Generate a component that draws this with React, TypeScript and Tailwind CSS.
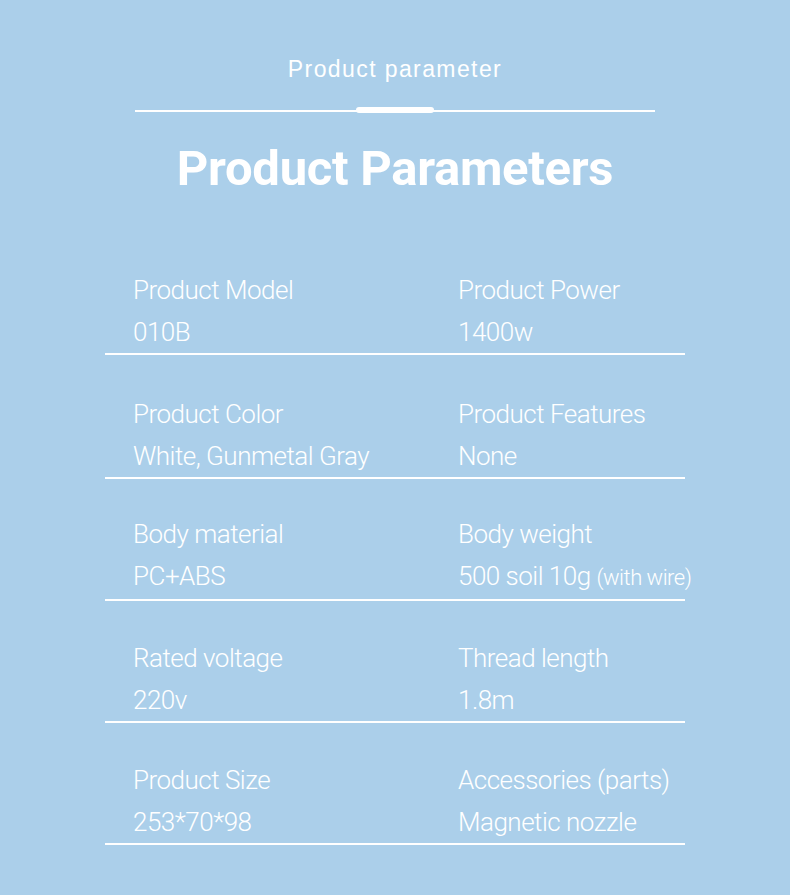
import React from "react";

const rows: { l: string; lv: React.ReactNode; r: string; rv: React.ReactNode; pt: string }[] = [
  { l: "Product Model", lv: "010B", r: "Product Power", rv: "1400w", pt: "pt-[0px]" },
  { l: "Product Color", lv: "White, Gunmetal Gray", r: "Product Features", rv: "None", pt: "pt-[38px]" },
  {
    l: "Body material",
    lv: "PC+ABS",
    r: "Body weight",
    rv: (
      <>
        500 soil 10g <span className="text-[22px]">(with wire)</span>
      </>
    ),
    pt: "pt-[34px]",
  },
  { l: "Rated voltage", lv: "220v", r: "Thread length", rv: "1.8m", pt: "pt-[36px]" },
  { l: "Product Size", lv: "253*70*98", r: "Accessories (parts)", rv: "Magnetic nozzle", pt: "pt-[36px]" },
];

export default function App() {
  return (
    <div className="w-[790px] h-[895px] bg-[#abcfea] flex flex-col items-center pt-[56px] overflow-hidden">
      <div
        className="text-white text-[23px] leading-[26px] tracking-[1.4px]"
        style={{ fontFamily: '"Liberation Sans", Arial, sans-serif' }}
      >
        Product parameter
      </div>
      <div className="relative mt-[28px] w-[520px] h-[2px] bg-white">
        <div className="absolute left-1/2 -translate-x-1/2 top-[-3px] w-[78px] h-[6px] rounded-[3px] bg-white" />
      </div>
      <h1
        className="mt-[27px] text-white font-bold text-[49px] leading-[60px] tracking-[-0.3px]"
        style={{ fontFamily: 'Roboto, "Noto Sans", sans-serif' }}
      >
        Product Parameters
      </h1>
      <div
        className="mt-[70px] w-[580px] flex flex-col text-white font-light text-[26px] leading-[42px] tracking-[-0.5px]"
        style={{ fontFamily: 'Roboto, "Noto Sans", sans-serif' }}
      >
        {rows.map((row, i) => (
          <div key={i} className={`${row.pt} border-b-2 border-white grid grid-cols-[353px_1fr] pl-[28px]`}>
            <div className="flex flex-col">
              <div>{row.l}</div>
              <div>{row.lv}</div>
            </div>
            <div className="flex flex-col -ml-[28px] whitespace-nowrap">
              <div>{row.r}</div>
              <div>{row.rv}</div>
            </div>
          </div>
        ))}
      </div>
    </div>
  );
}
